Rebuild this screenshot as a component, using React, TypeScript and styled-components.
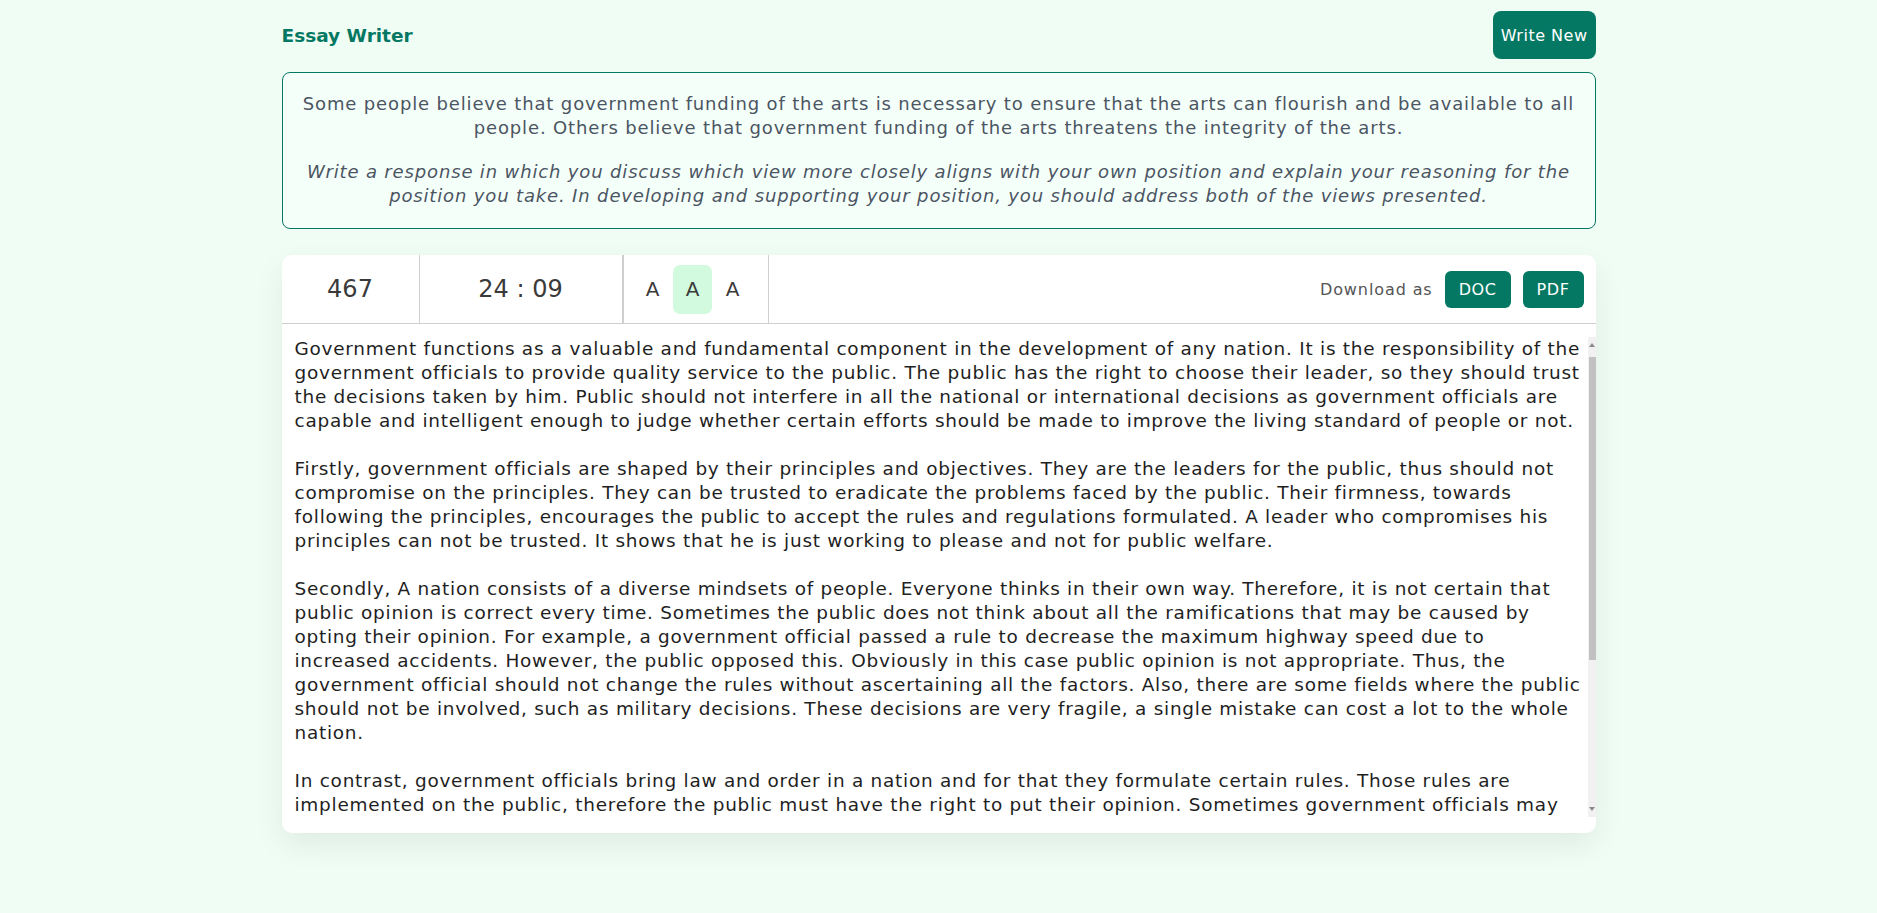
import React, { useEffect, useRef, useState } from 'react';
import styled, { createGlobalStyle } from 'styled-components';

const GREEN = '#047862';

const GlobalStyle = createGlobalStyle`
  body {
    margin: 0;
    background: #f0fdf4;
    font-family: "DejaVu Sans", "Noto Sans", sans-serif;
  }
`;

const Page = styled.div`
  min-height: 100vh;
  padding: 11px 0 40px;
  box-sizing: border-box;
`;

const Wrapper = styled.div`
  width: 1314px;
  margin: 0 auto;
`;

const Header = styled.div`
  display: flex;
  justify-content: space-between;
  align-items: center;
  height: 48px;
`;

const Title = styled.h1`
  margin: 0;
  font-size: 18.5px;
  font-weight: 700;
  color: ${GREEN};
`;

const WriteButton = styled.button`
  height: 48px;
  padding: 0 8px;
  border: none;
  border-radius: 8px;
  background: ${GREEN};
  color: #fff;
  font-family: inherit;
  font-size: 16px;
  letter-spacing: 0.5px;
  cursor: pointer;
`;

const PromptBox = styled.div`
  margin-top: 13px;
  border: 1px solid ${GREEN};
  border-radius: 8px;
  padding: 19px 14px 20px;
  text-align: center;
  background: #f5fff9;
`;

const PromptText = styled.p<{ italic?: boolean }>`
  margin: 0;
  font-size: 18px;
  letter-spacing: 0.85px;
  line-height: 24px;
  color: #4b5563;
  font-style: ${({ italic }) => (italic ? 'italic' : 'normal')};
  & + & {
    margin-top: 20px;
  }
`;

const EditorCard = styled.div`
  margin-top: 26px;
  height: 578px;
  background: #fff;
  border-radius: 10px;
  box-shadow: 0 12px 30px rgba(0, 0, 0, 0.07);
  overflow: hidden;
  display: flex;
  flex-direction: column;
`;

const Toolbar = styled.div`
  display: flex;
  height: 68px;
  flex-shrink: 0;
  border-bottom: 1px solid #cfcfcf;
`;

const Cell = styled.div<{ width: number; divider?: number }>`
  width: ${({ width }) => width}px;
  border-right: ${({ divider = 1 }) => divider}px solid #cfcfcf;
  display: flex;
  align-items: center;
  justify-content: center;
  font-size: 24px;
  color: #3a3a3a;
`;

const FontCell = styled(Cell)`
  gap: 1px;
  padding-right: 6px;
  box-sizing: border-box;
`;

const SizeButton = styled.button<{ active?: boolean }>`
  width: 39px;
  height: 49px;
  border: none;
  border-radius: 7px;
  background: ${({ active }) => (active ? '#d1fadf' : 'transparent')};
  color: #3a3a3a;
  font-family: inherit;
  font-size: 20px;
  padding: 0;
  cursor: pointer;
`;

const Downloads = styled.div`
  flex: 1;
  display: flex;
  align-items: center;
  justify-content: flex-end;
  gap: 12px;
  padding-right: 12px;
`;

const DownloadLabel = styled.span`
  font-size: 16px;
  letter-spacing: 0.9px;
  color: #555;
`;

const FileButton = styled.button`
  height: 37px;
  padding: 0 14px;
  border: none;
  border-radius: 6px;
  background: ${GREEN};
  color: #fff;
  font-family: inherit;
  font-size: 16px;
  letter-spacing: 0.6px;
  cursor: pointer;
`;

const EditorBody = styled.div`
  display: flex;
  margin-top: 13px;
  height: 480px;
`;

const EssayArea = styled.textarea`
  flex: 1;
  height: 100%;
  box-sizing: border-box;
  border: none;
  outline: none;
  resize: none;
  overflow-y: scroll;
  scrollbar-width: none;
  padding: 0 3px 0 13px;
  font-family: inherit;
  font-size: 18.47px;
  letter-spacing: 0.74px;
  line-height: 24px;
  color: #1f1f1f;
  background: #fff;

  &::-webkit-scrollbar {
    display: none;
  }
`;

const ScrollTrack = styled.div`
  position: relative;
  width: 8px;
  background: #f1f1f1;
`;

const ScrollArrow = styled.svg<{ bottom?: boolean }>`
  position: absolute;
  left: 1px;
  ${({ bottom }) => (bottom ? 'bottom: 6px;' : 'top: 6px;')}
`;

const ScrollThumb = styled.div`
  position: absolute;
  left: 1px;
  right: 0;
  background: #c1c1c1;
`;

const ARROW = 20;

const essay = `Government functions as a valuable and fundamental component in the development of any nation. It is the responsibility of the government officials to provide quality service to the public. The public has the right to choose their leader, so they should trust the decisions taken by him. Public should not interfere in all the national or international decisions as government officials are capable and intelligent enough to judge whether certain efforts should be made to improve the living standard of people or not.

Firstly, government officials are shaped by their principles and objectives. They are the leaders for the public, thus should not compromise on the principles. They can be trusted to eradicate the problems faced by the public. Their firmness, towards following the principles, encourages the public to accept the rules and regulations formulated. A leader who compromises his principles can not be trusted. It shows that he is just working to please and not for public welfare.

Secondly, A nation consists of a diverse mindsets of people. Everyone thinks in their own way. Therefore, it is not certain that public opinion is correct every time. Sometimes the public does not think about all the ramifications that may be caused by opting their opinion. For example, a government official passed a rule to decrease the maximum highway speed due to increased accidents. However, the public opposed this. Obviously in this case public opinion is not appropriate. Thus, the government official should not change the rules without ascertaining all the factors. Also, there are some fields where the public should not be involved, such as military decisions. These decisions are very fragile, a single mistake can cost a lot to the whole nation.

In contrast, government officials bring law and order in a nation and for that they formulate certain rules. Those rules are implemented on the public, therefore the public must have the right to put their opinion. Sometimes government officials may take decisions in haste, and the public is the first to feel the consequences of such choices. Listening to the voice of the people helps leaders to correct their course before the damage becomes serious. A healthy nation depends on a constant dialogue between those who govern and those who are governed.

In conclusion, although the public has the right to express its views, government officials are better equipped to take decisions that affect the whole country. They have the knowledge, the experience and the access to information that ordinary citizens often lack. Therefore, the public should place its trust in its leaders, while still raising its voice when a decision clearly harms the common good. In this way, both the government and the people can work together for the development and prosperity of the nation, and every citizen can benefit from the progress that follows.`;

const App = () => {
  const [size, setSize] = useState(1);
  const [text, setText] = useState(essay);
  const [thumb, setThumb] = useState({ top: ARROW, height: 0 });
  const areaRef = useRef<HTMLTextAreaElement>(null);

  const measure = () => {
    const el = areaRef.current;
    if (!el) return;
    const usable = el.clientHeight - ARROW * 2;
    const ratio = el.clientHeight / el.scrollHeight;
    setThumb({
      top: ARROW + (el.scrollTop / el.scrollHeight) * usable,
      height: ratio >= 1 ? 0 : ratio * usable,
    });
  };

  useEffect(measure, [text]);

  return (
    <Page>
      <GlobalStyle />
      <Wrapper>
        <Header>
          <Title>Essay Writer</Title>
          <WriteButton>Write New</WriteButton>
        </Header>

        <PromptBox>
          <PromptText>
            Some people believe that government funding of the arts is necessary to ensure that the arts can flourish and be available to all
            people. Others believe that government funding of the arts threatens the integrity of the arts.
          </PromptText>
          <PromptText italic>
            Write a response in which you discuss which view more closely aligns with your own position and explain your reasoning for the
            position you take. In developing and supporting your position, you should address both of the views presented.
          </PromptText>
        </PromptBox>

        <EditorCard>
          <Toolbar>
            <Cell width={137}>467</Cell>
            <Cell width={202} divider={2}>24 : 09</Cell>
            <FontCell width={145}>
              {[0, 1, 2].map((i) => (
                <SizeButton key={i} active={size === i} onClick={() => setSize(i)}>
                  A
                </SizeButton>
              ))}
            </FontCell>
            <Downloads>
              <DownloadLabel>Download as</DownloadLabel>
              <FileButton>DOC</FileButton>
              <FileButton>PDF</FileButton>
            </Downloads>
          </Toolbar>
          <EditorBody>
            <EssayArea
              ref={areaRef}
              value={text}
              onChange={(e) => setText(e.target.value)}
              onScroll={measure}
              spellCheck={false}
            />
            <ScrollTrack>
              <ScrollArrow width="6" height="4" viewBox="0 0 6 4">
                <path d="M0 4 L3 0 L6 4 Z" fill="#8a8a8a" />
              </ScrollArrow>
              <ScrollThumb style={{ top: thumb.top, height: thumb.height }} />
              <ScrollArrow bottom width="6" height="4" viewBox="0 0 6 4">
                <path d="M0 0 L3 4 L6 0 Z" fill="#8a8a8a" />
              </ScrollArrow>
            </ScrollTrack>
          </EditorBody>
        </EditorCard>
      </Wrapper>
    </Page>
  );
};

export default App;
